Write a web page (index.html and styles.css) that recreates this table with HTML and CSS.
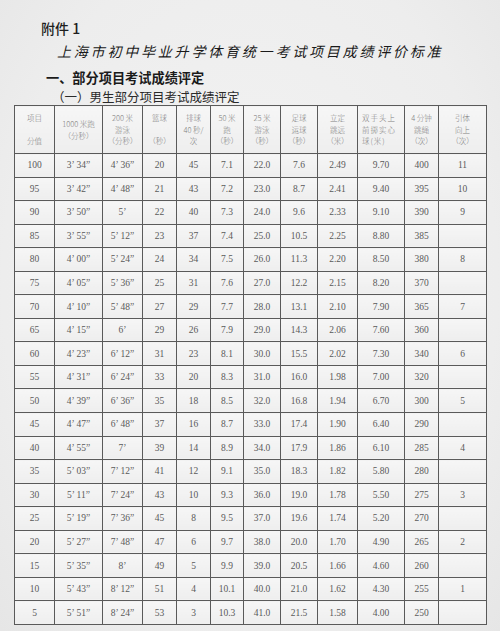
FILE: index.html
```html
<!DOCTYPE html>
<html lang="zh">
<head>
<meta charset="utf-8">
<link rel="stylesheet" href="styles.css">
</head>
<body>
<div class="page">
  <div class="annex">附件 1</div>
  <div class="title">上海市初中毕业升学体育统一考试项目成绩评价标准</div>
  <div class="h1">一、部分项目考试成绩评定</div>
  <div class="h2">（一）男生部分项目考试成绩评定</div>
  <table class="grid">
    <colgroup>
      <col style="width:40px"><col style="width:48px"><col style="width:40px"><col style="width:34px"><col style="width:34px"><col style="width:33px"><col style="width:37px"><col style="width:37px"><col style="width:40px"><col style="width:47px"><col style="width:34px"><col style="width:48px">
    </colgroup>
    <thead>
      <tr>
        <th>项目<br>&nbsp;<br>分值</th>
        <th>1000 米跑<br>（分秒）</th>
        <th>200 米<br>游泳<br>（分秒）</th>
        <th>篮球<br>&nbsp;<br>（秒）</th>
        <th>排球<br>40 秒/<br>次</th>
        <th>50 米<br>跑<br>（秒）</th>
        <th>25 米<br>游泳<br>（秒）</th>
        <th>足球<br>运球<br>（秒）</th>
        <th>立定<br>跳远<br>（米）</th>
        <th class="left">双手头上<br>前掷实心<br>球(米)</th>
        <th>4 分钟<br>跳绳<br>（次）</th>
        <th>引体<br>向上<br>（次）</th>
      </tr>
    </thead>
    <tbody>
      <tr><td>100</td><td>3’ 34”</td><td>4’ 36”</td><td>20</td><td>45</td><td>7.1</td><td>22.0</td><td>7.6</td><td>2.49</td><td>9.70</td><td>400</td><td>11</td></tr>
      <tr><td>95</td><td>3’ 42”</td><td>4’ 48”</td><td>21</td><td>43</td><td>7.2</td><td>23.0</td><td>8.7</td><td>2.41</td><td>9.40</td><td>395</td><td>10</td></tr>
      <tr><td>90</td><td>3’ 50”</td><td>5’</td><td>22</td><td>40</td><td>7.3</td><td>24.0</td><td>9.6</td><td>2.33</td><td>9.10</td><td>390</td><td>9</td></tr>
      <tr><td>85</td><td>3’ 55”</td><td>5’ 12”</td><td>23</td><td>37</td><td>7.4</td><td>25.0</td><td>10.5</td><td>2.25</td><td>8.80</td><td>385</td><td></td></tr>
      <tr><td>80</td><td>4’ 00”</td><td>5’ 24”</td><td>24</td><td>34</td><td>7.5</td><td>26.0</td><td>11.3</td><td>2.20</td><td>8.50</td><td>380</td><td>8</td></tr>
      <tr><td>75</td><td>4’ 05”</td><td>5’ 36”</td><td>25</td><td>31</td><td>7.6</td><td>27.0</td><td>12.2</td><td>2.15</td><td>8.20</td><td>370</td><td></td></tr>
      <tr><td>70</td><td>4’ 10”</td><td>5’ 48”</td><td>27</td><td>29</td><td>7.7</td><td>28.0</td><td>13.1</td><td>2.10</td><td>7.90</td><td>365</td><td>7</td></tr>
      <tr><td>65</td><td>4’ 15”</td><td>6’</td><td>29</td><td>26</td><td>7.9</td><td>29.0</td><td>14.3</td><td>2.06</td><td>7.60</td><td>360</td><td></td></tr>
      <tr><td>60</td><td>4’ 23”</td><td>6’ 12”</td><td>31</td><td>23</td><td>8.1</td><td>30.0</td><td>15.5</td><td>2.02</td><td>7.30</td><td>340</td><td>6</td></tr>
      <tr><td>55</td><td>4’ 31”</td><td>6’ 24”</td><td>33</td><td>20</td><td>8.3</td><td>31.0</td><td>16.0</td><td>1.98</td><td>7.00</td><td>320</td><td></td></tr>
      <tr><td>50</td><td>4’ 39”</td><td>6’ 36”</td><td>35</td><td>18</td><td>8.5</td><td>32.0</td><td>16.8</td><td>1.94</td><td>6.70</td><td>300</td><td>5</td></tr>
      <tr><td>45</td><td>4’ 47”</td><td>6’ 48”</td><td>37</td><td>16</td><td>8.7</td><td>33.0</td><td>17.4</td><td>1.90</td><td>6.40</td><td>290</td><td></td></tr>
      <tr><td>40</td><td>4’ 55”</td><td>7’</td><td>39</td><td>14</td><td>8.9</td><td>34.0</td><td>17.9</td><td>1.86</td><td>6.10</td><td>285</td><td>4</td></tr>
      <tr><td>35</td><td>5’ 03”</td><td>7’ 12”</td><td>41</td><td>12</td><td>9.1</td><td>35.0</td><td>18.3</td><td>1.82</td><td>5.80</td><td>280</td><td></td></tr>
      <tr><td>30</td><td>5’ 11”</td><td>7’ 24”</td><td>43</td><td>10</td><td>9.3</td><td>36.0</td><td>19.0</td><td>1.78</td><td>5.50</td><td>275</td><td>3</td></tr>
      <tr><td>25</td><td>5’ 19”</td><td>7’ 36”</td><td>45</td><td>8</td><td>9.5</td><td>37.0</td><td>19.6</td><td>1.74</td><td>5.20</td><td>270</td><td></td></tr>
      <tr><td>20</td><td>5’ 27”</td><td>7’ 48”</td><td>47</td><td>6</td><td>9.7</td><td>38.0</td><td>20.0</td><td>1.70</td><td>4.90</td><td>265</td><td>2</td></tr>
      <tr><td>15</td><td>5’ 35”</td><td>8’</td><td>49</td><td>5</td><td>9.9</td><td>39.0</td><td>20.5</td><td>1.66</td><td>4.60</td><td>260</td><td></td></tr>
      <tr><td>10</td><td>5’ 43”</td><td>8’ 12”</td><td>51</td><td>4</td><td>10.1</td><td>40.0</td><td>21.0</td><td>1.62</td><td>4.30</td><td>255</td><td>1</td></tr>
      <tr><td>5</td><td>5’ 51”</td><td>8’ 24”</td><td>53</td><td>3</td><td>10.3</td><td>41.0</td><td>21.5</td><td>1.58</td><td>4.00</td><td>250</td><td></td></tr>
    </tbody>
  </table>
</div>
</body>
</html>
```

FILE: styles.css
```css
html, body {
  margin: 0;
  padding: 0;
  background: #eeeeee;
}
body {
  width: 500px;
  height: 631px;
  overflow: hidden;
  background: radial-gradient(ellipse at 50% 45%, #f3f3f3 0%, #ededed 70%, #e6e6e6 100%);
}
.page {
  display: flex;
  flex-direction: column;
  align-items: flex-start;
  padding: 19px 0 0 14px;
  font-family: "Noto Sans CJK SC", sans-serif;
  color: #222;
}
.annex {
  margin-left: 27px;
  font-size: 14px;
  line-height: 18px;
  font-weight: 500;
  color: #1e1e1e;
}
.title {
  margin-left: 43px;
  margin-top: 5px;
  font-size: 14px;
  line-height: 18px;
  letter-spacing: 2.8px;
  font-weight: 400;
  color: #1a1a1a;
  font-style: italic;
}
.h1 {
  margin-left: 32px;
  margin-top: 11px;
  font-size: 13.2px;
  line-height: 14px;
  font-weight: 700;
  color: #1a1a1a;
}
.h2 {
  margin-left: 38px;
  margin-top: 5px;
  font-size: 12.5px;
  line-height: 14px;
  font-weight: 400;
  color: #2a2a2a;
}
.grid {
  margin-top: 1px;
  table-layout: fixed;
  width: 472px;
  border-collapse: collapse;
  border: 1px solid #8a8a8a;
  font-family: "Liberation Serif", "Noto Sans CJK SC", serif;
  color: #555;
}
.grid th, .grid td {
  border: 1px solid #5a5a5a;
  padding: 0;
  text-align: center;
  vertical-align: middle;
  background: linear-gradient(#f6f6f6, #eeeeee);
}
.grid th {
  height: 47px;
  font-family: "Noto Sans CJK SC", sans-serif;
  font-weight: 300;
  font-size: 7.5px;
  line-height: 11.5px;
  color: #808080;
}
.grid th.left {
  text-align: left;
  padding-left: 4px;
  letter-spacing: 1px;
}
.grid td {
  height: 22.55px;
  font-size: 9.5px;
  color: #5a5a5a;
}
```
